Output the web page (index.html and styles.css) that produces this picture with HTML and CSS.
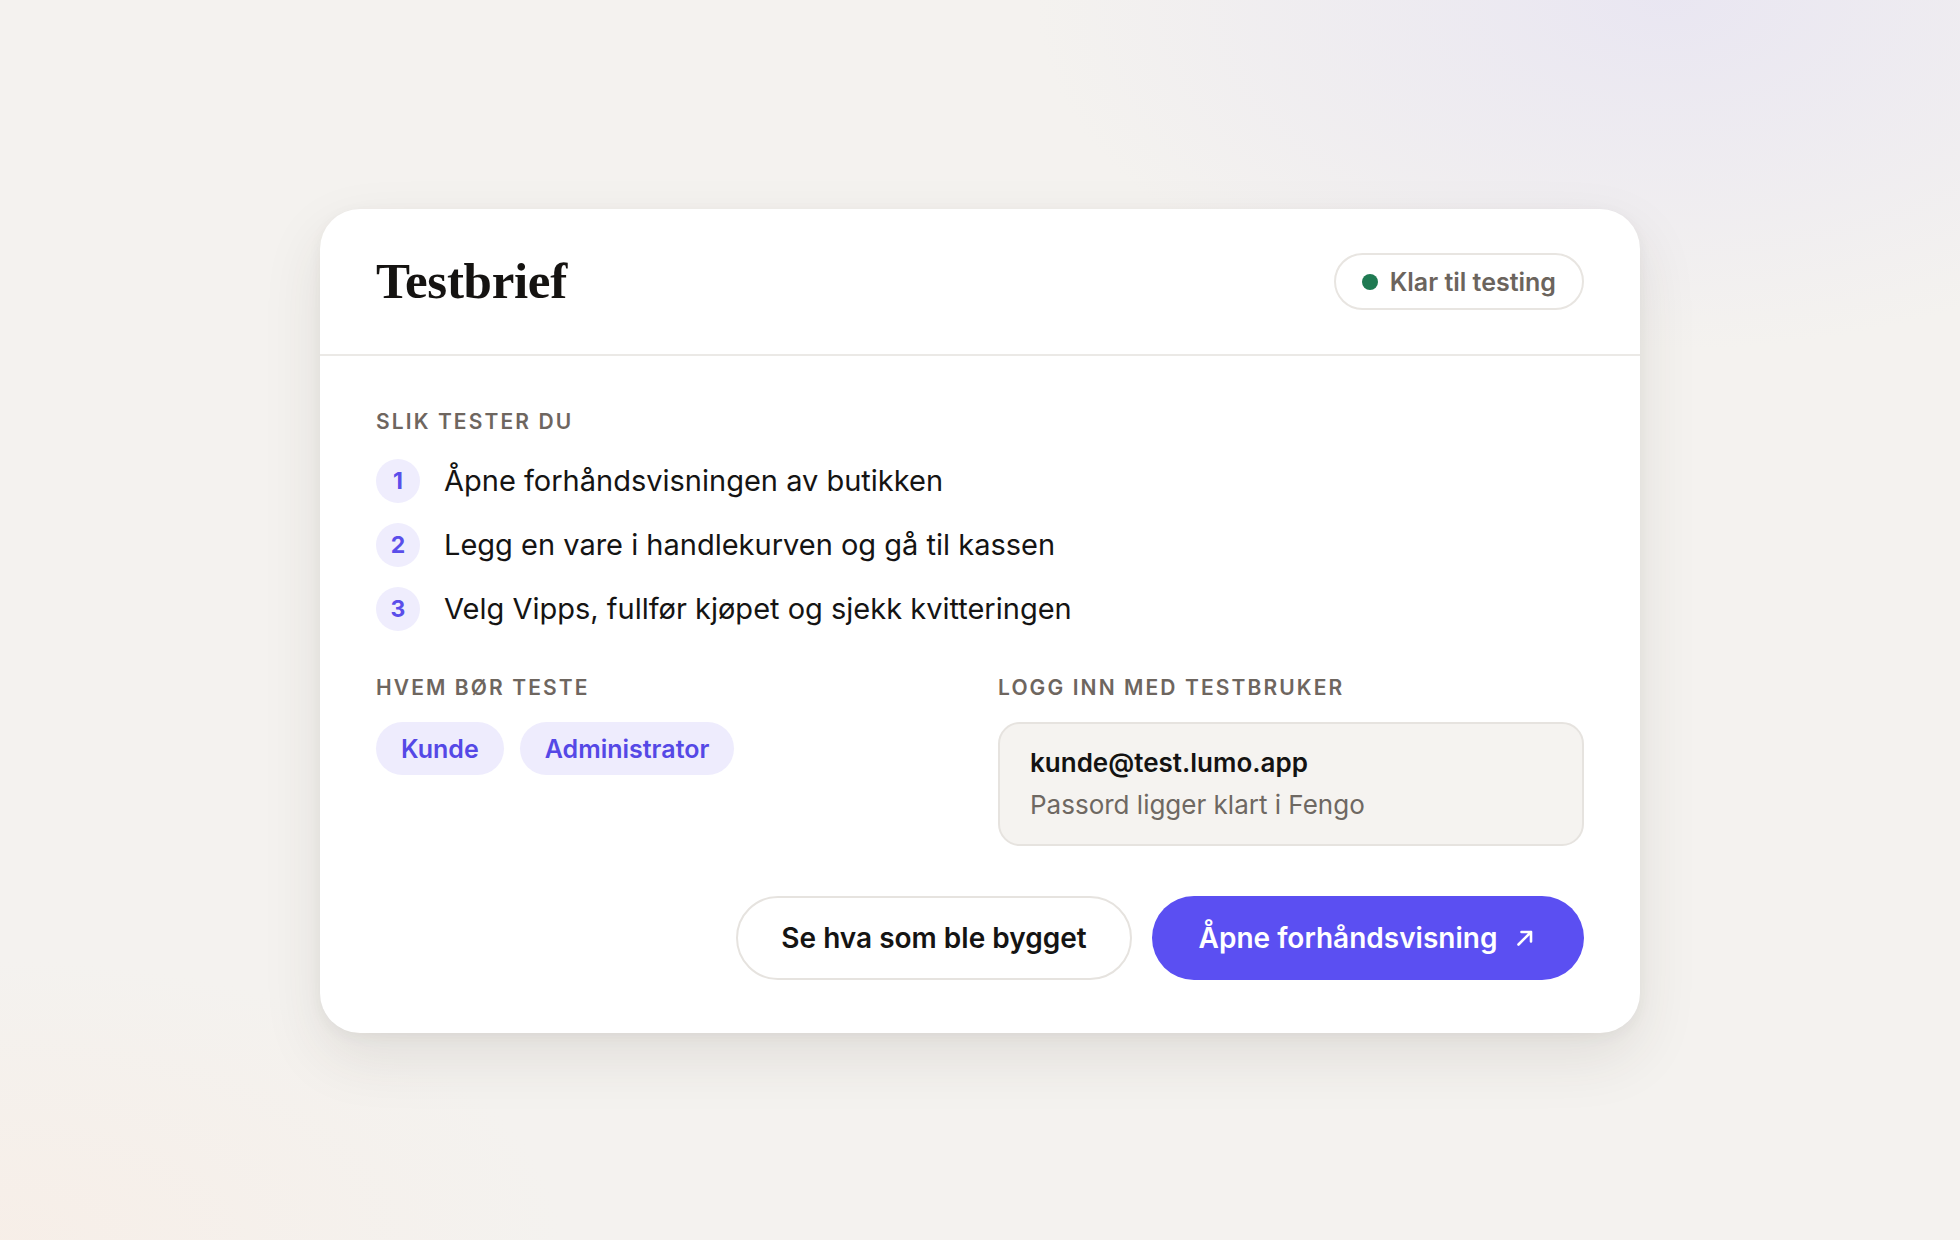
FILE: index.html
```html
<!DOCTYPE html>
<html lang="no">
<head>
<meta charset="utf-8">
<title>Testbrief</title>
<link rel="stylesheet" href="styles.css">
</head>
<body>
<main class="page">
  <section class="card">
    <header class="card-head">
      <h1 class="title">Testbrief</h1>
      <span class="status"><span class="status-dot"></span>Klar til testing</span>
    </header>
    <div class="card-body">
      <h2 class="label">Slik tester du</h2>
      <ol class="steps">
        <li class="step"><span class="step-num">1</span><span class="step-text">Åpne forhåndsvisningen av butikken</span></li>
        <li class="step"><span class="step-num">2</span><span class="step-text">Legg en vare i handlekurven og gå til kassen</span></li>
        <li class="step"><span class="step-num">3</span><span class="step-text">Velg Vipps, fullfør kjøpet og sjekk kvitteringen</span></li>
      </ol>
      <div class="cols">
        <div class="col">
          <h2 class="label">Hvem bør teste</h2>
          <div class="chips">
            <span class="chip">Kunde</span>
            <span class="chip">Administrator</span>
          </div>
        </div>
        <div class="col">
          <h2 class="label">Logg inn med testbruker</h2>
          <div class="cred">
            <div class="cred-user">kunde@test.lumo.app</div>
            <div class="cred-note">Passord ligger klart i Fengo</div>
          </div>
        </div>
      </div>
      <div class="actions">
        <button class="btn btn-ghost" type="button">Se hva som ble bygget</button>
        <button class="btn btn-primary" type="button">Åpne forhåndsvisning
          <svg class="btn-icon" viewBox="0 0 24 24" width="24" height="24" aria-hidden="true"><path d="M5.5 18.5L18 6M8.5 6H18v9.5" fill="none" stroke="currentColor" stroke-width="2.6" stroke-linecap="round" stroke-linejoin="round"/></svg>
        </button>
      </div>
    </div>
  </section>
</main>
</body>
</html>
```

FILE: styles.css
```css
* { box-sizing: border-box; }

html, body {
  margin: 0;
  height: 100%;
}

body {
  font-family: "Inter", "Noto Sans", sans-serif;
  color: #151413;
  background:
    radial-gradient(ellipse 900px 500px at 85% 0%, rgba(232, 229, 242, 0.9), rgba(232, 229, 242, 0) 70%),
    radial-gradient(ellipse 800px 400px at 0% 100%, rgba(247, 238, 231, 0.9), rgba(247, 238, 231, 0) 70%),
    #f4f2ef;
}

.page {
  min-height: 100%;
  display: flex;
  align-items: flex-start;
  justify-content: center;
  padding-top: 209px;
}

.card {
  width: 1320px;
  background: #fff;
  border-radius: 40px;
  box-shadow: 0 24px 60px rgba(60, 50, 40, 0.10), 0 4px 14px rgba(60, 50, 40, 0.05);
}

.card-head {
  display: flex;
  align-items: center;
  justify-content: space-between;
  padding: 44px 56px 44px 56px;
  border-bottom: 2px solid #ebe9e6;
}

.title {
  margin: 0;
  font-family: "Liberation Serif", "Times New Roman", serif;
  font-weight: 700;
  font-size: 51px;
  line-height: 57px;
  letter-spacing: -0.3px;
  color: #151311;
}

.status {
  display: inline-flex;
  align-items: center;
  gap: 12px;
  height: 57px;
  padding: 0 26px 0 26px;
  border: 2px solid #e8e5e1;
  border-radius: 999px;
  font-size: 25px;
  font-weight: 600;
  color: #6b645d;
}

.status-dot {
  width: 16px;
  height: 16px;
  border-radius: 50%;
  background: #1f7a52;
}

.card-body {
  padding: 53px 56px 53px 56px;
}

.label {
  margin: 0;
  font-size: 21px;
  line-height: 26px;
  font-weight: 600;
  letter-spacing: 0.1em;
  text-transform: uppercase;
  color: #6e665f;
}

.steps {
  list-style: none;
  margin: 24px 0 0;
  padding: 0;
  display: flex;
  flex-direction: column;
  gap: 20px;
}

.step {
  display: flex;
  align-items: center;
  gap: 24px;
}

.step-num {
  flex: none;
  width: 44px;
  height: 44px;
  border-radius: 50%;
  background: #efedfd;
  color: #5a4eea;
  font-size: 23px;
  font-weight: 700;
  display: flex;
  align-items: center;
  justify-content: center;
}

.step-text {
  font-size: 29px;
  line-height: 44px;
  color: #151413;
}

.cols {
  display: grid;
  grid-template-columns: 1fr 1fr;
  gap: 36px;
  margin-top: 44px;
}

.chips {
  display: flex;
  gap: 16px;
  margin-top: 21px;
}

.chip {
  display: inline-flex;
  align-items: center;
  height: 53px;
  padding: 0 25px;
  border-radius: 999px;
  background: #eeecfd;
  color: #5548e6;
  font-size: 25px;
  font-weight: 600;
}

.cred {
  margin-top: 21px;
  height: 124px;
  padding: 20px 30px;
  background: #f5f3f0;
  border: 2px solid #e6e3df;
  border-radius: 22px;
  display: flex;
  flex-direction: column;
  justify-content: center;
  gap: 4px;
}

.cred-user {
  font-size: 26px;
  line-height: 38px;
  font-weight: 600;
  color: #141312;
}

.cred-note {
  font-size: 26px;
  line-height: 38px;
  color: #6e6862;
}

.actions {
  display: flex;
  justify-content: flex-end;
  gap: 20px;
  margin-top: 50px;
}

.btn {
  height: 84px;
  border-radius: 999px;
  font-family: inherit;
  font-size: 28px;
  font-weight: 600;
  display: inline-flex;
  align-items: center;
  justify-content: center;
  gap: 16px;
  cursor: pointer;
}

.btn-ghost {
  width: 396px;
  background: #fff;
  border: 2px solid #e6e3df;
  color: #151413;
}

.btn-primary {
  width: 432px;
  background: #5b4ff2;
  border: none;
  color: #fff;
}

.btn-icon {
  flex: none;
}
```
